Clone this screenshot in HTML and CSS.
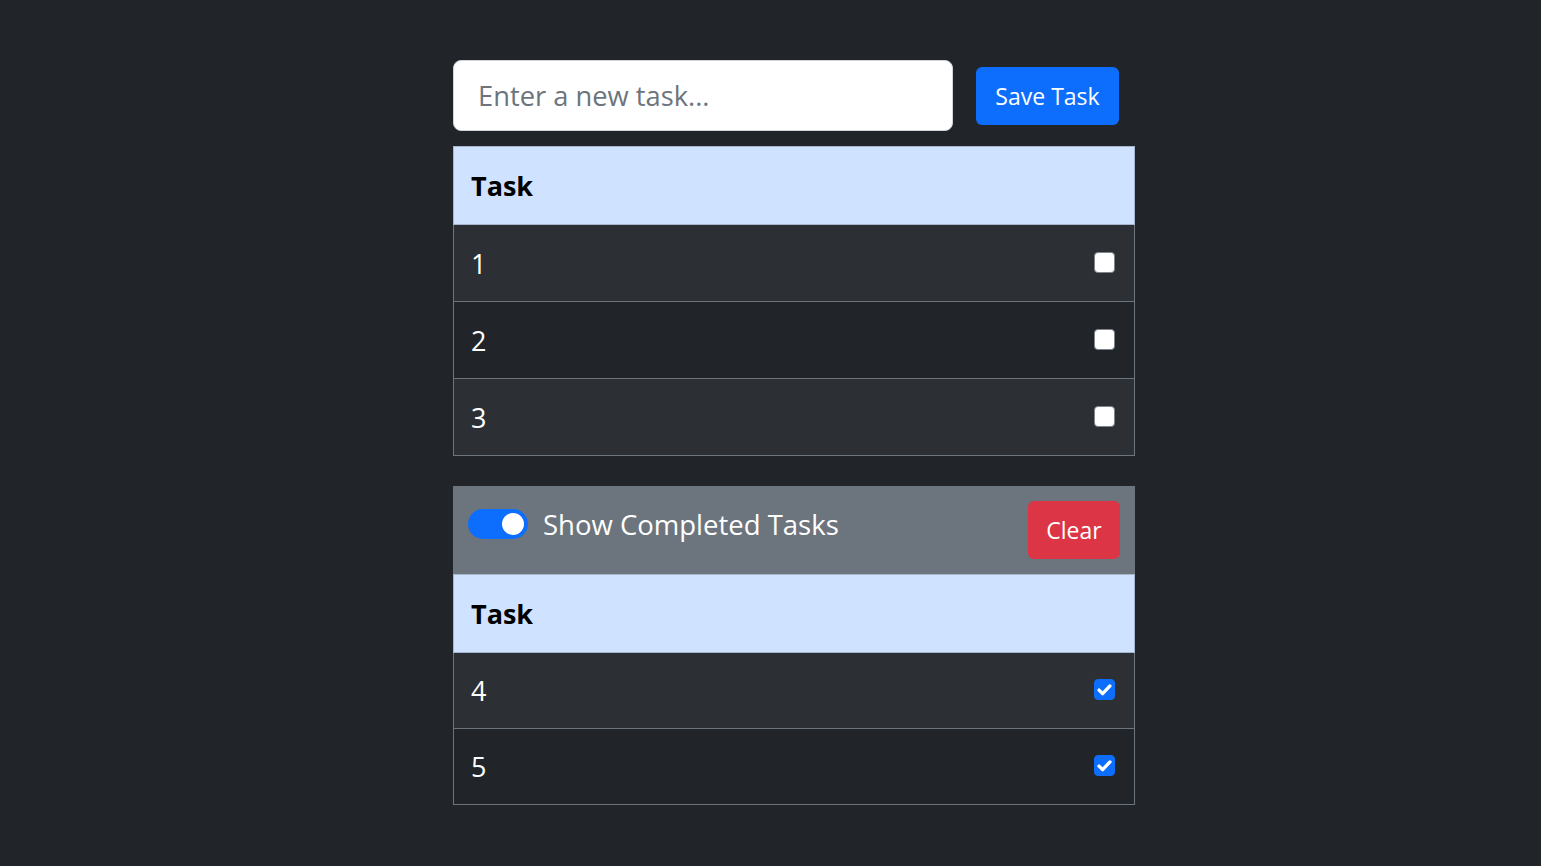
FILE: index.html
```html
<!DOCTYPE html>
<html>
<head>
<meta charset="utf-8">
<link rel="stylesheet" href="styles.css">
</head>
<body>
<main class="app">
  <form class="new-task">
    <input class="task-input" type="text" placeholder="Enter a new task...">
    <button type="button" class="btn btn-save">Save Task</button>
  </form>

  <table class="tasks">
    <thead><tr><th colspan="2">Task</th></tr></thead>
    <tbody>
      <tr class="odd"><td>1</td><td class="chk"><span class="box"></span></td></tr>
      <tr><td>2</td><td class="chk"><span class="box"></span></td></tr>
      <tr class="odd"><td>3</td><td class="chk"><span class="box"></span></td></tr>
    </tbody>
  </table>

  <div class="completed-bar">
    <label class="switch-label"><span class="switch"><span class="knob"></span></span>Show Completed Tasks</label>
    <button type="button" class="btn btn-clear">Clear</button>
  </div>
  <table class="tasks tasks-done">
    <thead><tr><th colspan="2">Task</th></tr></thead>
    <tbody>
      <tr class="odd"><td>4</td><td class="chk"><span class="box checked"><svg viewBox="0 0 20 20" width="21" height="21"><path d="M4.8 10.6l3.4 3.3L15.2 6.6" fill="none" stroke="#fff" stroke-width="3.2" stroke-linecap="round" stroke-linejoin="round"/></svg></span></td></tr>
      <tr><td>5</td><td class="chk"><span class="box checked"><svg viewBox="0 0 20 20" width="21" height="21"><path d="M4.8 10.6l3.4 3.3L15.2 6.6" fill="none" stroke="#fff" stroke-width="3.2" stroke-linecap="round" stroke-linejoin="round"/></svg></span></td></tr>
    </tbody>
  </table>
</main>
</body>
</html>
```
FILE: styles.css
```css
html, body {
  margin: 0;
  padding: 0;
  background: #212529;
  color: #dee2e6;
  font-family: "Open Sans", "Noto Sans", sans-serif;
}
.app {
  width: 682px;
  margin-left: 453px;
  padding-top: 60px;
}
.new-task {
  display: flex;
  align-items: center;
  margin: 0 0 15px 0;
}
.task-input {
  box-sizing: border-box;
  width: 500px;
  height: 71px;
  border: 1px solid #ced4da;
  border-radius: 8px;
  background: #fff;
  padding: 0 24px;
  font-family: inherit;
  font-size: 27.3px;
  color: #212529;
  outline: none;
}
.task-input::placeholder { color: #6c757d; }
.btn {
  border: none;
  font-family: inherit;
  color: #fff;
  border-radius: 6px;
  height: 58px;
  font-size: 23px;
  padding: 0 16px;
  cursor: pointer;
}
.btn-save {
  background: #0d6efd;
  margin-left: 23px;
  width: 143px;
}
.btn-clear {
  background: #dc3545;
  width: 92px;
}
.tasks {
  width: 682px;
  border-collapse: collapse;
  font-size: 27px;
}
.tasks th {
  background: #cfe2ff;
  color: #000;
  text-align: left;
  font-weight: 700;
  height: 77px;
  padding: 0 17px;
  border: 1px solid #a6b5cc;
}
.tasks td {
  height: 76px;
  padding: 0 17px;
  color: #fff;
  border-top: 1px solid #6c757d;
  border-bottom: 1px solid #6c757d;
}
.tasks td:first-child { border-left: 1px solid #6c757d; }
.tasks td:last-child { border-right: 1px solid #6c757d; }
.tasks tr.odd td { background: #2c3034; }
.tasks .chk { text-align: right; width: 40px; padding-right: 19px; }
.tasks-done th { height: 77px; }
.tasks-done td { height: 75px; }
.box {
  display: inline-block;
  box-sizing: border-box;
  width: 21px;
  height: 21px;
  border-radius: 4px;
  background: #fff;
  border: 1px solid #7d848b;
  vertical-align: middle;
  position: relative;
  top: -4px;
}
.box.checked {
  background: #0d6efd;
  border-color: #0d6efd;
}
.box svg { display: block; margin: -1px; }
.completed-bar {
  margin-top: 30px;
  background: #6c757d;
  height: 88px;
  display: flex;
  align-items: center;
  justify-content: space-between;
  padding: 0 15px;
  box-sizing: border-box;
}
.switch-label {
  display: flex;
  align-items: center;
  font-size: 27.5px;
  color: #fff;
  margin-top: -12px;
}
.switch {
  box-sizing: border-box;
  width: 60px;
  height: 30px;
  border-radius: 15px;
  background: #0d6efd;
  margin-right: 15px;
  display: flex;
  align-items: center;
  justify-content: flex-end;
  padding-right: 4px;
}
.knob {
  width: 22px;
  height: 22px;
  border-radius: 50%;
  background: #fff;
}
```
